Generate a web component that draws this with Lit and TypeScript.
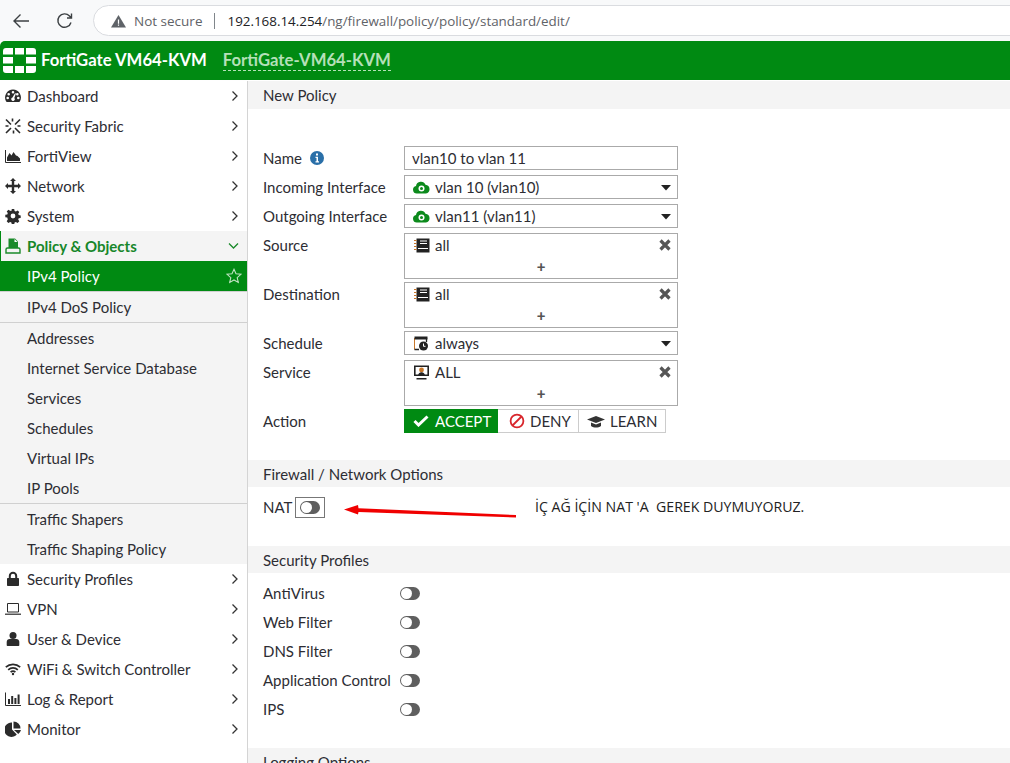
import { LitElement, html, css, svg } from "lit";
import { customElement } from "lit/decorators.js";

const ic = (body: unknown, size = 16, box = "0 0 16 16") =>
  html`<svg class="ic" width=${size} height=${size} viewBox=${box}>${body}</svg>`;

const icons: Record<string, unknown> = {
  dashboard: ic(svg`<path fill="#2b2b2b" fill-rule="evenodd" d="M8 1.500a8 8 0 0 0-7 11.800c.2.400.5.600 1 .6h12c.5 0 .8-.2 1-.6A8 8 0 0 0 8 1.500zM8 3a1.300 1.300 0 1 1 0 2.600A1.300 1.300 0 0 1 8 3zM3.700 5a1.300 1.300 0 1 1 0 2.600 1.300 1.300 0 0 1 0-2.600zm8.600 0a1.300 1.300 0 1 1 0 2.600 1.300 1.300 0 0 1 0-2.600zM2.700 8.700a1.300 1.300 0 1 1 0 2.600 1.300 1.300 0 0 1 0-2.600zm10.600 0a1.300 1.300 0 1 1 0 2.600 1.300 1.300 0 0 1 0-2.600zM10 5.200l1 .4-1.700 4.500a1.700 1.700 0 1 1-1.800-.5z"/>`),
  fabric: ic(svg`<g fill="none" stroke="#2b2b2b" stroke-width="1.600"><path d="M1 1.500l5 5M10 10l5 5M15 1.500l-5 5M6 10l-5 5"/><path d="M7.500 0.500v3M0.500 8h3M15.500 8h-3M8.500 15.500v-3"/></g>`),
  view: ic(svg`<path fill="#2b2b2b" d="M2 13V9.500l2.500-4.500 2 2.500 2-3.500 2.500 3.500 1.500.5 2.500 2.500V13z"/><path stroke="#2b2b2b" stroke-width="1" fill="none" d="M.5 2v12.500H16"/>`),
  network: ic(svg`<path fill="#2b2b2b" d="M8 0l3 3H9.200v3.800H13V5l3 3-3 3V9.200H9.200V13H11l-3 3-3-3h1.800V9.200H3V11L0 8l3-3v1.800h3.800V3H5z"/>`),
  system: ic(svg`<path fill="#2b2b2b" fill-rule="evenodd" d="M6.800 1h2.400l.4 2 1.300.5 1.700-1.100 1.700 1.700-1.100 1.700.5 1.300 2 .4v2.400l-2 .4-.5 1.300 1.100 1.700-1.700 1.700-1.700-1.100-1.300.5-.4 2H6.800l-.4-2-1.300-.5-1.700 1.100-1.700-1.700 1.100-1.700L2.300 9.600l-2-.4V6.800l2-.4.5-1.300-1.100-1.700 1.700-1.700 1.700 1.100L6.400 3zM8 5.600a2.400 2.400 0 1 0 0 4.800 2.400 2.400 0 0 0 0-4.800z"/>`),
  policy: ic(svg`<path fill="#1a8a2a" d="M3.500 0.500H10l3 3v7H3.500z"/><path fill="#fff" d="M9.500 1V4H12.500z"/><path fill="#f4f4f4" stroke="#1a8a2a" stroke-width="1.400" d="M1 15v-3.500c0-1 .7-1.500 1.500-1.500h11c.8 0 1.500.5 1.500 1.500V15z"/>`),
  lock: ic(svg`<path fill="#2b2b2b" d="M3 7h10c.5 0 1 .4 1 1v6c0 .6-.5 1-1 1H3c-.5 0-1-.4-1-1V8c0-.6.500-1 1-1z"/><path fill="none" stroke="#2b2b2b" stroke-width="2" d="M4.800 7.500V5a3.200 3.200 0 0 1 6.400 0v2.500"/>`),
  vpn: ic(svg`<path fill="none" stroke="#2b2b2b" stroke-width="1" d="M2.500 2.500h11v8.500h-11z"/><path fill="#555" d="M0 12.500h16v1.500H0z"/>`),
  user: ic(svg`<circle fill="#2b2b2b" cx="8" cy="4.500" r="3.500"/><path fill="#2b2b2b" d="M2.500 15c-.5 0-.8-.3-.8-.8V11c0-1.800 1.300-3 3-3h6.600c1.700 0 3 1.200 3 3v3.200c0 .5-.3.8-.8.800z"/>`),
  wifi: ic(svg`<g fill="none" stroke="#2b2b2b" stroke-width="1.700"><path d="M.8 6.200a10.500 10.500 0 0 1 14.400 0"/><path d="M3.200 8.800a7 7 0 0 1 9.600 0"/><path d="M5.600 11.200a3.500 3.500 0 0 1 4.800 0"/></g><circle fill="#2b2b2b" cx="8" cy="13" r="1.200"/>`),
  log: ic(svg`<path stroke="#2b2b2b" fill="none" d="M.5 1.500v13H16"/><path fill="#2b2b2b" d="M3 8h2v5H3zM6.200 5h2v8h-2zM9.400 7h2v6h-2zM12.600 3.500h2V13h-2z"/>`),
  monitor: ic(svg`<path fill="#2b2b2b" d="M7 1.500V8.500l4.800 5A7.200 7.200 0 1 1 7 1.500z"/><path fill="#2b2b2b" d="M8.500.5A7 7 0 0 1 15.500 7.500h-7zM9 9h7a7.500 7.500 0 0 1-2.700 4z"/>`),
};

const right = html`<svg class="chev" width="8" height="12" viewBox="0 0 8 12"><path fill="none" stroke="#333" stroke-width="1.300" d="M1.500 1.500L6 6l-4.500 4.500"/></svg>`;
const down = html`<svg class="chev" width="11" height="8" viewBox="0 0 11 8"><path fill="none" stroke="#1a8a2a" stroke-width="1.300" d="M1 1.500L5.500 6 10 1.500"/></svg>`;
const star = html`<svg class="chev star" width="16" height="16" viewBox="0 0 16 16"><path fill="none" stroke="#bfe3c2" stroke-width="1.100" d="M8 1.300l2 4.500 4.900.5-3.700 3.300 1.100 4.800L8 12l-4.300 2.400 1.100-4.800L1.100 6.300 6 5.800z"/></svg>`;

const cloud = html`<svg class="fi" width="17" height="14" viewBox="0 0 17 14"><path fill="#0c8a1c" d="M4 13.500A3.800 3.800 0 0 1 3 6 5 5 0 0 1 12.500 4.800 4.400 4.400 0 0 1 13 13.500z"/><circle cx="8.500" cy="8.500" r="3" fill="#fff"/><circle cx="8.500" cy="8.500" r="1.500" fill="#0c8a1c"/></svg>`;
const book = html`<svg class="fi" width="17" height="15" viewBox="0 0 17 15"><path fill="#222" d="M3.500 .5h13v14h-13z"/><path fill="#fff" d="M7 2.500h7v1H7zM7 5h7v1H7z"/><path fill="#fff" d="M5 10h10v1H5z"/><path fill="#c8772a" d="M1 2h2.500v1H1zM1 5h2.500v1H1zM1 8h2.500v1H1zM1 11h2.500v1H1z"/></svg>`;
const schedule = html`<svg class="fi" width="17" height="15" viewBox="0 0 17 15"><path fill="none" stroke="#c8772a" stroke-width="1" d="M1.500 13.500V2"/><path fill="none" stroke="#222" stroke-width="1.300" d="M1.500 13.500H6M13.500 2v4"/><path fill="#222" d="M1.500 .5h13V3.500H1.500z"/><circle cx="10.500" cy="10" r="4.500" fill="#222"/><path fill="none" stroke="#fff" d="M10.500 7.500v2.800h2"/></svg>`;
const service = html`<svg class="fi" width="17" height="15" viewBox="0 0 17 15"><path fill="none" stroke="#222" stroke-width="1.600" d="M1.800 1.300h13.400v9H1.800z"/><circle cx="8.500" cy="5" r="2.400" fill="#c8772a"/><path fill="#222" d="M5 11c0-2.500 1.500-3.800 3.500-3.800S12 8.500 12 11zM3.500 13h10v1.500h-10z"/></svg>`;
const caret = html`<svg class="caret" width="10" height="6" viewBox="0 0 10 6"><path fill="#222" d="M0 0h10L5 5.500z"/></svg>`;
const cross = html`<svg class="x" width="12" height="12" viewBox="0 0 12 12"><path stroke="#555" stroke-width="3.200" d="M1.500 1.500l9 9M10.500 1.500l-9 9"/></svg>`;

type Nav = { icon?: string; label: string };
const topNav: Nav[] = [
  { icon: "dashboard", label: "Dashboard" },
  { icon: "fabric", label: "Security Fabric" },
  { icon: "view", label: "FortiView" },
  { icon: "network", label: "Network" },
  { icon: "system", label: "System" },
];
const bottomNav: Nav[] = [
  { icon: "lock", label: "Security Profiles" },
  { icon: "vpn", label: "VPN" },
  { icon: "user", label: "User & Device" },
  { icon: "wifi", label: "WiFi & Switch Controller" },
  { icon: "log", label: "Log & Report" },
  { icon: "monitor", label: "Monitor" },
];
const objects = ["Addresses", "Internet Service Database", "Services", "Schedules", "Virtual IPs", "IP Pools"];
const profiles = ["AntiVirus", "Web Filter", "DNS Filter", "Application Control", "IPS"];

@customElement("app-root")
export class AppRoot extends LitElement {
  static styles = css`
    :host {
      display: block;
      position: relative;
      width: 1010px;
      height: 763px;
      overflow: hidden;
      background: #fff;
      font-family: Lato, "Liberation Sans", sans-serif;
      font-size: 15px;
      color: #2d2d33;
    }
    .toolbar {
      height: 41px;
      box-sizing: border-box;
      background: #f8f9fa;
      display: flex;
      align-items: center;
      padding: 0 0 0 12px;
    }
    .nav-btn { width: 18px; height: 18px; flex: none; }
    .nav-btn.reload { margin-left: 26px; }
    .omni {
      flex: 1;
      margin: 0 -30px 0 19px;
      height: 31px;
      box-sizing: border-box;
      border: 1px solid #dadce0;
      border-radius: 16px;
      background: #fff;
      display: flex;
      align-items: center;
      padding-left: 17px;
      font-family: "Open Sans", sans-serif;
      font-size: 13.4px;
      white-space: nowrap;
    }
    .omni .warn { color: #5f6368; margin-left: 8px; font-size: 13.5px; }
    .omni .sep { width: 1px; height: 16px; background: #80868b; margin: 0 12px 0 12px; }
    .omni .host { color: #202124; }
    .omni .path { color: #5f6368; }
    .banner {
      height: 39px;
      margin-bottom: 1px;
      box-sizing: border-box;
      padding: 0 0 1px 3px;
      background: #008a12;
      border-radius: 5px 0 0 0;
      display: flex;
      align-items: center;
      color: #fff;
      font-size: 16.7px;
      font-weight: 700;
    }
    .brand { margin-left: 5px; }
    .hostname {
      margin-left: 16px;
      color: #b5e0b9;
      border-bottom: 1px dashed #b5e0b9;
      line-height: 20px;
    }
    .body { display: flex; height: 682px; }
    .side {
      width: 247px;
      flex: none;
      border-right: 1px solid #d4d4d4;
      box-sizing: content-box;
    }
    .row {
      height: 30px;
      display: flex;
      align-items: center;
      position: relative;
      padding-left: 27px;
    }
    .ic { position: absolute; left: 5px; top: 7px; }
    .chev { position: absolute; right: 8px; top: 50%; transform: translateY(-50%); }
    .chev.star { right: 5px; }
    .row.open { background: #f4f4f4; color: #17872a; font-weight: 700; border-left: 1px solid #008a12; padding-left: 26px; }
    .row.open .ic { left: 4px; }
    .row.active { background: #008a12; color: #fff; }
    .sub { background: #f4f4f4; }
    .sub.ruled { border-bottom: 1px solid #d0d0d0; }
    .row.active + .sep-line { height: 1px; background: #d0d0d0; }
    .main { flex: 1; min-width: 0; }
    .band {
      height: 27px;
      background: #f4f4f4;
      display: flex;
      align-items: center;
      padding-left: 15px;
    }
    .band.first { height: 28px; }
    .form {
      padding: 37px 0 0 15px;
      display: flex;
      flex-direction: column;
      gap: 5px;
    }
    .field-row { display: flex; }
    .field-row.tight { margin-top: -2px; }
    .field-row label { width: 141px; flex: none; line-height: 24px; display: flex; align-items: center; height: 24px; }
    .info { margin-left: 8px; }
    .field {
      width: 274px;
      height: 24px;
      box-sizing: border-box;
      border: 1px solid #aaa;
      display: flex;
      align-items: center;
      padding-left: 7px;
      position: relative;
    }
    .field.tall {
      height: 46px;
      align-items: flex-start;
      padding-top: 2px;
    }
    .fi { flex: none; margin: 0 5px 0 1px; }
    .field.tall .fi { margin-top: 2px; }
    .caret { position: absolute; right: 6px; top: 9px; }
    .x { position: absolute; right: 6px; top: 5px; }
    .plus {
      position: absolute;
      left: 0;
      right: 0;
      bottom: 2px;
      text-align: center;
      color: #555;
      font-weight: 900;
      font-size: 15px;
      line-height: 20px;
    }
    .actions { display: flex; height: 24px; }
    .act {
      box-sizing: border-box;
      display: flex;
      align-items: center;
      border: 1px solid #ccc;
      border-left: 0;
    }
    .act.on { background: #008a12; color: #fff; border: 0; width: 94px; padding-left: 9px; gap: 6px; }
    .act.deny { width: 81px; padding-left: 11px; gap: 5px; }
    .act.learn { width: 87px; padding-left: 8px; gap: 5px; }
    .band.fw { margin-top: 27px; }
    .nat {
      height: 59px;
      display: flex;
      align-items: flex-start;
      padding: 10px 0 0 15px;
      box-sizing: border-box;
    }
    .nat span { line-height: 20px; }
    .nat-box {
      margin-left: 3px;
      width: 30px;
      height: 21px;
      box-sizing: border-box;
      border: 1px solid #777;
      display: flex;
      align-items: center;
      justify-content: center;
    }
    .toggle {
      width: 20px;
      height: 13px;
      border-radius: 7px;
      background: #5f5f5f;
      position: relative;
      flex: none;
    }
    .toggle::after {
      content: "";
      position: absolute;
      left: 1px;
      top: 1px;
      width: 11px;
      height: 11px;
      border-radius: 50%;
      background: #fff;
    }
    .profiles {
      padding: 8px 0 0 15px;
      display: flex;
      flex-direction: column;
      gap: 5px;
    }
    .profile { display: flex; align-items: center; height: 24px; }
    .profile span { width: 137px; flex: none; white-space: nowrap; }
    .band.log { margin-top: 27px; }
    .arrow { position: absolute; left: 340px; top: 500px; }
    .note {
      position: absolute;
      left: 535px;
      top: 497px;
      font-family: "Open Sans", sans-serif;
      font-size: 14.15px;
      line-height: 20px;
      color: #222;
      white-space: pre;
    }
  `;

  private navRow(n: Nav) {
    return html`<div class="row">${icons[n.icon!]}${n.label}${right}</div>`;
  }

  render() {
    return html`
      <div class="toolbar">
        <svg class="nav-btn" viewBox="0 0 18 18"><path fill="none" stroke="#3c4043" stroke-width="1.400" d="M17 9H2M8.500 2.500L2 9l6.500 6.500"/></svg>
        <svg class="nav-btn reload" viewBox="0 0 18 18"><path fill="none" stroke="#3c4043" stroke-width="1.400" d="M15 10.500A6.700 6.700 0 1 1 13.500 4L15.500 6M15.500 1.500V6H11"/></svg>
        <div class="omni">
          <svg width="15" height="14" viewBox="0 0 15 14"><path fill="#5f6368" d="M7.500 1L15 13.500H0z"/><path fill="#fff" d="M6.900 5.500h1.200v4.200H6.900zM6.900 10.600h1.200v1.200H6.900z"/></svg>
          <span class="warn">Not secure</span><span class="sep"></span>
          <span class="host">192.168.14.254</span><span class="path">/ng/firewall/policy/policy/standard/edit/</span>
        </div>
      </div>
      <div class="banner">
        <svg width="33" height="25" viewBox="0 0 33 25"><path fill="#fff" d="M3 0h7v6.500H0V3a3 3 0 0 1 3-3zM12 0h9v6.500h-9zM23 0h7a3 3 0 0 1 3 3v3.500H23zM0 9h10v6.500H0zM23 9h10v6.500H23zM0 18h10v7H3a3 3 0 0 1-3-3zM12 18h9v7h-9zM23 18h10v4a3 3 0 0 1-3 3h-7z"/></svg>
        <span class="brand">FortiGate VM64-KVM</span>
        <span class="hostname">FortiGate-VM64-KVM</span>
      </div>
      <div class="body">
        <nav class="side">
          ${topNav.map((n) => this.navRow(n))}
          <div class="row open">${icons.policy}Policy &amp; Objects${down}</div>
          <div class="row active">IPv4 Policy${star}</div>
          <div class="sep-line"></div>
          <div class="sub ruled"><div class="row">IPv4 DoS Policy</div></div>
          <div class="sub ruled">${objects.map((o) => html`<div class="row">${o}</div>`)}</div>
          <div class="sub">
            <div class="row">Traffic Shapers</div>
            <div class="row">Traffic Shaping Policy</div>
          </div>
          ${bottomNav.map((n) => this.navRow(n))}
        </nav>
        <main class="main">
          <div class="band first">New Policy</div>
          <div class="form">
            <div class="field-row">
              <label>Name
                <svg class="info" width="14" height="14" viewBox="0 0 14 14"><circle cx="7" cy="7" r="7" fill="#2a6fa8"/><path fill="#fff" d="M6 2.500h2v2H6zM5.500 5.800h2.500v4.500h1v1.200H5.500v-1.200h1V7h-1z"/></svg>
              </label>
              <div class="field">vlan10 to vlan 11</div>
            </div>
            <div class="field-row"><label>Incoming Interface</label><div class="field">${cloud}vlan 10 (vlan10)${caret}</div></div>
            <div class="field-row"><label>Outgoing Interface</label><div class="field">${cloud}vlan11 (vlan11)${caret}</div></div>
            <div class="field-row"><label>Source</label><div class="field tall">${book}all${cross}<div class="plus">+</div></div></div>
            <div class="field-row tight"><label>Destination</label><div class="field tall">${book}all${cross}<div class="plus">+</div></div></div>
            <div class="field-row tight"><label>Schedule</label><div class="field">${schedule}always${caret}</div></div>
            <div class="field-row"><label>Service</label><div class="field tall">${service}ALL${cross}<div class="plus">+</div></div></div>
            <div class="field-row tight">
              <label>Action</label>
              <div class="actions">
                <div class="act on"><svg width="16" height="12" viewBox="0 0 16 12"><path fill="none" stroke="#fff" stroke-width="3" d="M1.500 6l4 4 9-8.500"/></svg>ACCEPT</div>
                <div class="act deny"><svg width="16" height="16" viewBox="0 0 16 16"><circle cx="8" cy="8" r="6.400" fill="none" stroke="#d8262c" stroke-width="1.800"/><path stroke="#d8262c" stroke-width="1.800" d="M3.500 12.500l9-9"/></svg>DENY</div>
                <div class="act learn"><svg width="18" height="13" viewBox="0 0 18 13"><path fill="#333" d="M9 1L18 4.500 9 8 0 4.500z"/><path fill="#333" d="M4 7.500l5 2 5-2V11c-3 2-7 2-10 0z"/></svg>LEARN</div>
              </div>
            </div>
          </div>
          <div class="band fw">Firewall / Network Options</div>
          <div class="nat"><span>NAT</span><div class="nat-box"><div class="toggle"></div></div></div>
          <div class="band">Security Profiles</div>
          <div class="profiles">
            ${profiles.map((p) => html`<div class="profile"><span>${p}</span><div class="toggle"></div></div>`)}
          </div>
          <div class="band log">Logging Options</div>
        </main>
      </div>
      <svg class="arrow" width="180" height="24" viewBox="0 0 180 24"><path fill="#f00000" d="M4 9.500L18 5 18.500 8.200 176 15 176 17.500 18.500 12 18 14.500z"/></svg>
      <div class="note">İÇ AĞ İÇİN NAT 'A  GEREK DUYMUYORUZ.</div>
    `;
  }
}
